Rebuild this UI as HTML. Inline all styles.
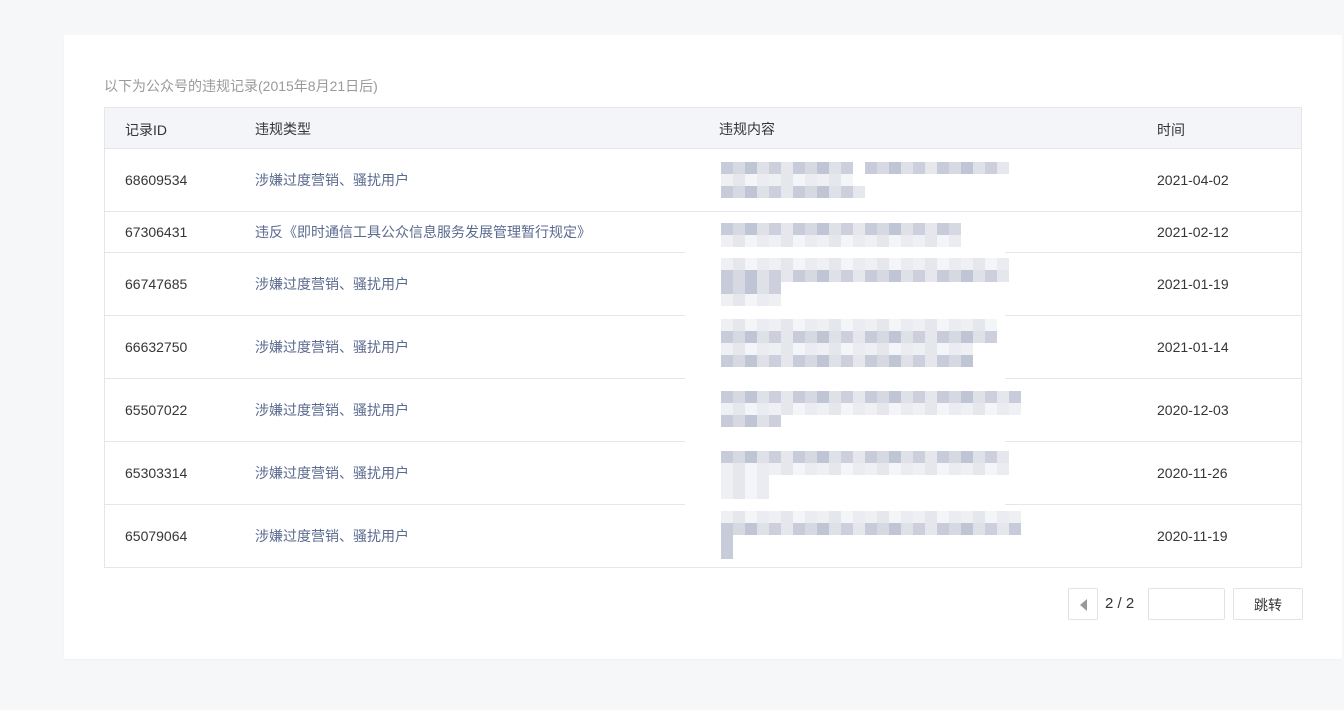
<!DOCTYPE html>
<html><head><meta charset="utf-8"><style>
body{margin:0;width:1344px;height:710px;background:#f6f7f9;font-family:"Liberation Sans","Noto Sans CJK SC",sans-serif;position:relative;overflow:hidden}
.card{position:absolute;left:64px;top:35px;width:1278px;height:624px;background:#fff;box-shadow:0 1px 2px rgba(0,0,0,.03)}
.cap{position:absolute;left:104px;top:76px;font-size:14px;color:#9a9a9a}
.tbl{position:absolute;left:104px;top:107px;width:1196px;height:459px;border:1px solid #e4e6eb}
.hd{position:absolute;left:0;top:0;width:100%;height:40px;background:#f4f5f9;border-bottom:1px solid #e4e6eb}
.row{position:absolute;left:0;width:100%;border-bottom:1px solid #e4e6eb}
.t{position:absolute;font-size:14px;color:#353535;white-space:nowrap}
.ty{color:#5b6a8f;margin-top:-2px}
.d{position:absolute;height:12px;background:repeating-linear-gradient(90deg,#c8ccda 0 12px,#d6d9e2 12px 24px,#c0c5d5 24px 36px,#dfe1e8 36px 48px,#cdd0dc 48px 60px,#e6e7ed 60px 72px)}
.l{position:absolute;height:12px;background:repeating-linear-gradient(90deg,#eef0f4 0 12px,#e5e7ed 12px 24px,#f4f5f8 24px 36px,#eaecf1 36px 48px)}
.w{position:absolute;height:3px;background:#fff;left:580px;width:320px}
.btn{position:absolute;border:1px solid #e2e2e2;border-radius:2px;background:#fff;box-sizing:border-box}
</style></head><body>
<div class="card"></div>
<div class="cap">以下为公众号的违规记录(2015年8月21日后)</div>
<div class="tbl">
<div class="hd"><span class="t" style="left:20px;top:12px">记录ID</span><span class="t" style="left:150px;top:11px">违规类型</span><span class="t" style="left:614px;top:11px">违规内容</span><span class="t" style="left:1052px;top:12px">时间</span></div>
<div class="row" style="top:41px;height:62px"><span class="t" style="left:20px;top:23px">68609534</span><span class="t ty" style="left:150px;top:23px">涉嫌过度营销、骚扰用户</span><span class="t" style="left:1052px;top:23px">2021-04-02</span></div>
<div class="row" style="top:104px;height:40px"><span class="t" style="left:20px;top:12px">67306431</span><span class="t ty" style="left:150px;top:12px">违反《即时通信工具公众信息服务发展管理暂行规定》</span><span class="t" style="left:1052px;top:12px">2021-02-12</span></div>
<div class="row" style="top:145px;height:62px"><span class="t" style="left:20px;top:23px">66747685</span><span class="t ty" style="left:150px;top:23px">涉嫌过度营销、骚扰用户</span><span class="t" style="left:1052px;top:23px">2021-01-19</span></div>
<div class="row" style="top:208px;height:62px"><span class="t" style="left:20px;top:23px">66632750</span><span class="t ty" style="left:150px;top:23px">涉嫌过度营销、骚扰用户</span><span class="t" style="left:1052px;top:23px">2021-01-14</span></div>
<div class="row" style="top:271px;height:62px"><span class="t" style="left:20px;top:23px">65507022</span><span class="t ty" style="left:150px;top:23px">涉嫌过度营销、骚扰用户</span><span class="t" style="left:1052px;top:23px">2020-12-03</span></div>
<div class="row" style="top:334px;height:62px"><span class="t" style="left:20px;top:23px">65303314</span><span class="t ty" style="left:150px;top:23px">涉嫌过度营销、骚扰用户</span><span class="t" style="left:1052px;top:23px">2020-11-26</span></div>
<div class="row" style="top:397px;height:62px;border-bottom:none"><span class="t" style="left:20px;top:23px">65079064</span><span class="t ty" style="left:150px;top:23px">涉嫌过度营销、骚扰用户</span><span class="t" style="left:1052px;top:23px">2020-11-19</span></div>
<div class="w" style="top:144px"></div><div class="w" style="top:207px"></div><div class="w" style="top:270px"></div><div class="w" style="top:333px"></div><div class="w" style="top:396px"></div>
</div>
<div class="d" style="left:721px;top:162px;width:132px"></div><div class="d" style="left:865px;top:162px;width:144px"></div>
<div class="l" style="left:721px;top:174px;width:132px"></div><div class="d" style="left:721px;top:186px;width:144px"></div>
<div class="d" style="left:721px;top:223px;width:240px"></div><div class="l" style="left:721px;top:235px;width:240px"></div>
<div class="l" style="left:721px;top:258px;width:288px"></div><div class="d" style="left:721px;top:270px;width:288px"></div><div class="d" style="left:721px;top:282px;width:60px"></div><div class="l" style="left:721px;top:294px;width:60px"></div>
<div class="l" style="left:721px;top:319px;width:276px"></div><div class="d" style="left:721px;top:331px;width:276px"></div><div class="l" style="left:721px;top:343px;width:252px"></div><div class="d" style="left:721px;top:355px;width:252px"></div>
<div class="d" style="left:721px;top:391px;width:300px"></div><div class="l" style="left:721px;top:403px;width:300px"></div><div class="d" style="left:721px;top:415px;width:60px"></div>
<div class="d" style="left:721px;top:451px;width:288px"></div><div class="l" style="left:721px;top:463px;width:288px"></div><div class="l" style="left:721px;top:475px;width:48px"></div><div class="l" style="left:721px;top:487px;width:48px"></div>
<div class="l" style="left:721px;top:511px;width:300px"></div><div class="d" style="left:721px;top:523px;width:300px"></div><div class="d" style="left:721px;top:535px;width:12px"></div><div class="d" style="left:721px;top:547px;width:12px"></div>
<div class="btn" style="left:1068px;top:588px;width:30px;height:32px"><div style="position:absolute;left:11px;top:10px;width:0;height:0;border-top:6px solid transparent;border-bottom:6px solid transparent;border-right:7px solid #999"></div></div>
<span class="t" style="left:1105px;top:595px;font-size:15px">2 / 2</span>
<div class="btn" style="left:1148px;top:588px;width:77px;height:32px"></div>
<div class="btn" style="left:1233px;top:588px;width:70px;height:32px"><span class="t" style="left:20px;top:6px">跳转</span></div>
</body></html>
